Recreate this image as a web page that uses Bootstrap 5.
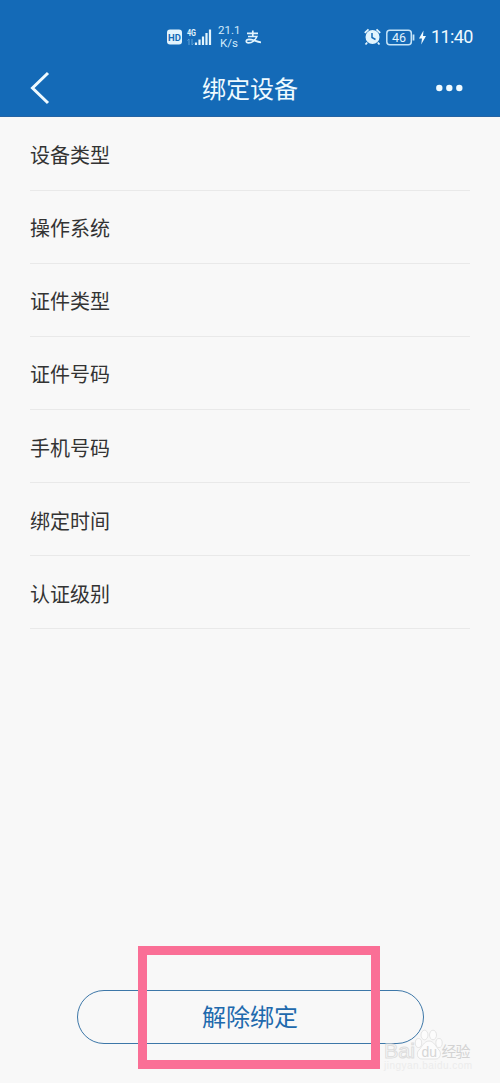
<!DOCTYPE html>
<html lang="zh-CN">
<head>
<meta charset="utf-8">
<meta name="viewport" content="width=device-width, initial-scale=1">
<title>绑定设备</title>
<link href="https://cdn.jsdelivr.net/npm/bootstrap@5.3.0/dist/css/bootstrap.min.css" rel="stylesheet">
<style>
body{background:#f8f8f8;color:#333;font-family:Roboto,"Noto Sans CJK SC",sans-serif}
.screen{height:1083px}
.topbar{height:117px;background:#146ab7;color:#effaff;border-bottom:1px solid #2564a4}
.status{height:60px;padding:14px 28px 0 167px}
.status svg,.titlebar svg{display:block;flex:none}
.speed{width:22px;margin-left:6px;font-size:11.5px;line-height:13px;color:#d3ebfb}
.clock{font-size:18px;line-height:24px;width:41px;margin-left:4px;white-space:nowrap;letter-spacing:-.6px}
.titlebar{height:57px;padding:0 37px 2px 30px}
.titlebar h1{font:400 24px/34px "Noto Sans CJK SC",sans-serif}
.titlebar .side{width:70px}
.titlebar .side-end{width:63px}
.device-list{padding:.5px 30px 0}
.device-row{height:73.15px;padding-top:3px;border-bottom:1px solid #e9e9e9;font:400 20px/30px "Noto Sans CJK SC",sans-serif}
.unbind{width:347px;height:54px;margin-bottom:39.5px;border:1.5px solid #3d77a8;color:#2069ad;font:400 24px/30px "Noto Sans CJK SC",sans-serif;padding:0 0 2px}
.highlight{left:138px;top:946px;width:242px;height:123px;border:9px solid #fa6f96}
.watermark{left:380px;top:1026px;width:100px;height:50px}
</style>
</head>
<body>
<div class="screen position-relative d-flex flex-column overflow-hidden">
  <header class="topbar">
    <div class="status d-flex align-items-center">
      <svg width="15" height="16" viewBox="0 0 15 16"><rect y=".5" width="15" height="15" rx="3" fill="#e2f4fd"/><text x="7.500" y="11.600" text-anchor="middle" font-family="Roboto" font-weight="700" font-size="9.500" fill="#146ab7">HD</text></svg>
      <svg class="ms-1" width="26" height="20" viewBox="0 0 26 20"><text x="1" y="8.500" font-family="Roboto" font-weight="700" font-size="8.500" textLength="9" lengthAdjust="spacingAndGlyphs" fill="#e2f4fd">4G</text><path d="M3 12v6M1.500 13.500 3 12M6 12v6l1.500-1.500" stroke="#5fa2d6" fill="none"/><path d="M10 15.500v2.500M13.500 12.500v5.500M17 9.500v8.500M20.500 6v12M24 2.500v15.500" stroke="#e2f4fd" stroke-width="2.200"/></svg>
      <div class="speed text-center">21.1<br>K/s</div>
      <svg style="margin-left:5px" width="17" height="16" viewBox="0 0 17 16"><path d="M2 4.300h11M7.800 1.500v6M3 7.500h8.800C10.500 11 7 13.800 3.500 13.800.5 13.800.5 10.500 4 10.300c4 0 7 2.500 12 3" fill="none" stroke="#e2f4fd" stroke-width="1.700"/></svg>
      <svg class="ms-auto" width="17" height="18" viewBox="0 0 17 18"><circle cx="8.500" cy="9" r="7" fill="#e2f4fd"/><path d="M.8 4.800 4.500 1.300M16.200 4.800l-3.700-3.500M3.200 14.500 1.500 16.500M13.800 14.500l1.700 2" stroke="#e2f4fd" stroke-width="1.800"/><path d="M8 5v4.500l3.500 2" fill="none" stroke="#146ab7" stroke-width="1.500"/></svg>
      <svg style="margin-left:5px" width="29" height="17" viewBox="0 0 29 17"><rect x=".8" y="1.300" width="24.500" height="14.500" rx="3" fill="none" stroke="#c5e4f8" stroke-width="1.500"/><path d="M27.500 5.500v6" stroke="#c5e4f8" stroke-width="1.800"/><text x="13" y="13" text-anchor="middle" font-family="Roboto" font-size="12.500" fill="#e2f4fd">46</text></svg>
      <svg style="margin-left:3px" width="9" height="15" viewBox="0 0 9 15"><path d="M5.500.5 1 8.500h3L3.200 14.500 8 6H5z" fill="#effaff"/></svg>
      <div class="clock">11:40</div>
    </div>
    <div class="titlebar d-flex align-items-center justify-content-between">
      <div class="side"><svg width="20" height="34" viewBox="0 0 20 34"><path d="M18 2 2.500 17 18 32" fill="none" stroke="#effaff" stroke-width="3"/></svg></div>
      <h1 class="m-0">绑定设备</h1>
      <div class="side-end d-flex justify-content-end"><svg width="27" height="8" viewBox="0 0 27 8" fill="#effaff"><circle cx="3.300" cy="4" r="3.200"/><circle cx="13.300" cy="4" r="3.200"/><circle cx="23.300" cy="4" r="3.200"/></svg></div>
    </div>
  </header>
  <main class="device-list">
    <div class="device-row d-flex align-items-center">设备类型</div>
    <div class="device-row d-flex align-items-center">操作系统</div>
    <div class="device-row d-flex align-items-center">证件类型</div>
    <div class="device-row d-flex align-items-center">证件号码</div>
    <div class="device-row d-flex align-items-center">手机号码</div>
    <div class="device-row d-flex align-items-center">绑定时间</div>
    <div class="device-row d-flex align-items-center">认证级别</div>
  </main>
  <button class="unbind btn rounded-pill mt-auto mx-auto" type="button">解除绑定</button>
  <div class="highlight position-absolute pe-none"></div>
  <svg class="watermark position-absolute pe-none" viewBox="0 0 100 50">
    <g fill="#fcfcfc" stroke="#dedede" stroke-width=".8">
      <ellipse cx="38.500" cy="17" rx="3.200" ry="4.500"/><ellipse cx="44.500" cy="9" rx="3.500" ry="4.800"/><ellipse cx="53" cy="9" rx="3.500" ry="4.800"/><ellipse cx="59" cy="17" rx="3.200" ry="4.500"/>
      <path d="M49 15c5 0 7 6 10 9s1 9-3 9H42c-5 0-6-6-3-9s5-9 10-9z"/>
      <text x="4" y="32" font-family="Liberation Sans" font-size="20" stroke-width="1" textLength="31" lengthAdjust="spacingAndGlyphs">Bai</text>
    </g>
    <text x="41.500" y="31" font-family="Liberation Sans" font-size="14" fill="#d6d6d6">du</text>
    <text x="61.500" y="31" font-family="Noto Sans CJK SC" font-size="15" fill="#d3d3d3" textLength="29">经验</text>
    <text x="4" y="43" font-family="Liberation Sans" font-size="10" fill="#ececec" textLength="88">jingyan.baidu.com</text>
  </svg>
</div>
<script src="https://cdn.jsdelivr.net/npm/bootstrap@5.3.0/dist/js/bootstrap.bundle.min.js"></script>
</body>
</html>
